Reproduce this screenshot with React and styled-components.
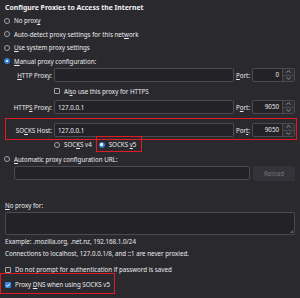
import React from "react";
import styled, { createGlobalStyle } from "styled-components";

const GlobalStyle = createGlobalStyle`
  html, body {
    margin: 0;
    padding: 0;
    background: #2a2a2e;
  }
  body {
    width: 300px;
    height: 298px;
    overflow: hidden;
    font-family: "Noto Sans", "DejaVu Sans", sans-serif;
    font-size: 6.2px;
    color: #ebebee;
  }
`;

const Key = ({ children }) => <U>{children}</U>;

const Radio = ({ on }) => <RadioDot $on={on} />;

const Check = ({ on }) => (
  <CheckBox $on={on}>
    {on && (
      <svg width="6" height="6" viewBox="0 0 6 6">
        <path d="M1.2 3.1 L2.5 4.4 L4.9 1.6" fill="none" stroke="#fff" strokeWidth="1" />
      </svg>
    )}
  </CheckBox>
);

const Chevron = ({ up }) => (
  <svg width="5" height="3" viewBox="0 0 5 3">
    <path d={up ? "M0.5 2.6 L2.5 0.6 L4.5 2.6" : "M0.5 0.4 L2.5 2.4 L4.5 0.4"} fill="none" stroke="#a9a8ad" strokeWidth="0.8" />
  </svg>
);

const PortSpin = ({ value }) => (
  <Spin>
    <SpinValue>{value}</SpinValue>
    <SpinButtons>
      <SpinButton><Chevron up /></SpinButton>
      <SpinButton><Chevron /></SpinButton>
    </SpinButtons>
  </Spin>
);

const ProxyField = ({ label, value, port, portLabel, mt }) => (
  <FieldGrid $mt={mt}>
    <FieldLabel>{label}</FieldLabel>
    <TextInput readOnly value={value} />
    <PortLabel>{portLabel}</PortLabel>
    <PortSpin value={port} />
  </FieldGrid>
);

const App = () => {
  return (
    <Page>
      <GlobalStyle />
      <Title>Configure Proxies to Access the Internet</Title>

      <OptionRow><Radio /><span>No prox<Key>y</Key></span></OptionRow>
      <OptionRow><Radio /><span>Auto-detect proxy settings for this net<Key>w</Key>ork</span></OptionRow>
      <OptionRow><Radio /><span><Key>U</Key>se system proxy settings</span></OptionRow>
      <OptionRow><Radio on /><span><Key>M</Key>anual proxy configuration:</span></OptionRow>

      <ProxyField
        label={<span><Key>H</Key>TTP Proxy:</span>}
        value=""
        portLabel={<span><Key>P</Key>ort:</span>}
        port="0"
      />
      <OptionRow $h={18} $indent={50}>
        <Check /><span>Al<Key>s</Key>o use this proxy for HTTPS</span>
      </OptionRow>
      <ProxyField
        label={<span>HTTP<Key>S</Key> Proxy:</span>}
        value="127.0.0.1"
        portLabel={<span>P<Key>o</Key>rt:</span>}
        port="9050"
      />
      <Highlight $inset="-5px -2px -3px 1px">
        <ProxyField
          mt={9}
          label={<span>SO<Key>C</Key>KS Host:</span>}
          value="127.0.0.1"
          portLabel={<span>Por<Key>t</Key>:</span>}
          port="9050"
        />
      </Highlight>
      <SocksRow>
        <SocksOption><Radio /><span>SOC<Key>K</Key>S v4</span></SocksOption>
        <Highlight $inset="-4px -6px -3px -3px">
          <SocksOption><Radio on /><span>SOCKS <Key>v</Key>5</span></SocksOption>
        </Highlight>
      </SocksRow>

      <OptionRow $h={14}><Radio /><span><Key>A</Key>utomatic proxy configuration URL:</span></OptionRow>
      <UrlRow>
        <TextInput readOnly value="" />
        <ReloadButton disabled>Reload</ReloadButton>
      </UrlRow>

      <SectionLabel><Key>N</Key>o proxy for:</SectionLabel>
      <TextBox />
      <Note $mt={1}>Example: .mozilla.org, .net.nz, 192.168.1.0/24</Note>
      <Note>Connections to localhost, 127.0.0.1/8, and ::1 are never proxied.</Note>

      <CheckRow $mt={4}>
        <Check /><span>Do not prompt for authent<Key>i</Key>cation if password is saved</span>
      </CheckRow>
      <Highlight $inset="-5px -5px -3px -4px" $fit>
        <CheckRow $mt={2}>
          <Check on /><span>Proxy <Key>D</Key>NS when using SOCKS v5</span>
        </CheckRow>
      </Highlight>
    </Page>
  );
};

export default App;

const Page = styled.div`
  padding: 0 5px 0 4px;
`;

const U = styled.span`
  text-decoration: underline;
  text-underline-offset: 1px;
`;

const Title = styled.h1`
  margin: 0;
  height: 14px;
  display: flex;
  align-items: center;
  padding-left: 1px;
  font-size: 6.9px;
  font-weight: 700;
  color: #f0f0f2;
`;

const OptionRow = styled.div`
  display: flex;
  align-items: center;
  gap: 4px;
  height: ${(p) => p.$h || 13.5}px;
  padding-left: ${(p) => p.$indent || 0}px;
  white-space: nowrap;
`;

const RadioDot = styled.span`
  flex: none;
  width: 6px;
  height: 6px;
  box-sizing: border-box;
  border-radius: 50%;
  border: 1px solid ${(p) => (p.$on ? "#3584e4" : "#a3a2a8")};
  background: ${(p) => (p.$on ? "#3584e4" : "transparent")};
  display: grid;
  place-items: center;

  &::after {
    content: "";
    width: 2.4px;
    height: 2.4px;
    border-radius: 50%;
    background: ${(p) => (p.$on ? "#ffffff" : "transparent")};
  }
`;

const CheckBox = styled.span`
  flex: none;
  width: 6px;
  height: 6px;
  box-sizing: border-box;
  border-radius: 1px;
  border: 1px solid ${(p) => (p.$on ? "#3584e4" : "#a3a2a8")};
  background: ${(p) => (p.$on ? "#3584e4" : "transparent")};
  display: grid;
  place-items: center;

  svg {
    margin: -1px;
  }
`;

const FieldGrid = styled.div`
  display: grid;
  grid-template-columns: 40px 1fr auto 43px;
  column-gap: 2px;
  align-items: center;
  height: 14px;
  margin-left: 8px;
  margin-top: ${(p) => p.$mt || 0}px;
  white-space: nowrap;
`;

const FieldLabel = styled.div`
  display: flex;
  justify-content: flex-end;
`;

const PortLabel = styled.div``;

const TextInput = styled.input`
  box-sizing: border-box;
  width: 100%;
  min-width: 0;
  height: 14px;
  margin: 0;
  padding: 0 3px;
  border: 1px solid #4b4a50;
  border-radius: 2px;
  background: #232227;
  color: #ebebee;
  font: inherit;
  outline: none;
`;

const Spin = styled.div`
  display: flex;
  height: 14px;
  box-sizing: border-box;
  border: 1px solid #4b4a50;
  border-radius: 2px;
  background: #232227;
  overflow: hidden;
`;

const SpinValue = styled.span`
  flex: 1;
  text-align: right;
  padding-right: 3px;
  line-height: 12px;
`;

const SpinButtons = styled.div`
  width: 11px;
  border-left: 1px solid #4b4a50;
  display: flex;
  flex-direction: column;
  background: #2f2e33;
`;

const SpinButton = styled.span`
  flex: 1;
  display: grid;
  place-items: center;

  & + & {
    border-top: 1px solid #4b4a50;
  }
`;

const Highlight = styled.div`
  position: relative;
  width: ${(p) => (p.$fit ? "fit-content" : "auto")};

  &::after {
    content: "";
    position: absolute;
    inset: ${(p) => p.$inset};
    border: 1.5px solid #e01b24;
    pointer-events: none;
  }
`;

const SocksRow = styled.div`
  display: flex;
  align-items: center;
  gap: 7px;
  height: 15px;
  padding-left: 50px;
  white-space: nowrap;
`;

const SocksOption = styled.div`
  display: flex;
  align-items: center;
  gap: 4px;
`;

const UrlRow = styled.div`
  display: flex;
  gap: 3px;
  height: 15px;
  padding-left: 10px;
`;

const ReloadButton = styled.button`
  flex: none;
  width: 42px;
  height: 15px;
  margin: 0;
  padding: 0;
  border: none;
  border-radius: 2px;
  background: #34333a;
  color: #77767c;
  font: inherit;
`;

const SectionLabel = styled.div`
  display: flex;
  align-items: center;
  height: 14px;
  margin-top: 17px;
  padding-left: 1px;
`;

const TextBox = styled.div`
  position: relative;
  height: 23px;
  margin-left: 1px;
  box-sizing: border-box;
  border: 1px solid #4b4a50;
  border-radius: 2px;
  background: #232227;

  &::after {
    content: "";
    position: absolute;
    right: 1px;
    bottom: 1px;
    border-style: solid;
    border-width: 0 0 3px 3px;
    border-color: transparent transparent #6a696f transparent;
  }
`;

const Note = styled.div`
  display: flex;
  align-items: center;
  height: 11.5px;
  margin-top: ${(p) => p.$mt || 0}px;
  padding-left: 1px;
  white-space: nowrap;
`;

const CheckRow = styled.div`
  display: flex;
  align-items: center;
  gap: 4px;
  height: 13px;
  margin-top: ${(p) => p.$mt || 0}px;
  padding-left: 1px;
  white-space: nowrap;
`;
